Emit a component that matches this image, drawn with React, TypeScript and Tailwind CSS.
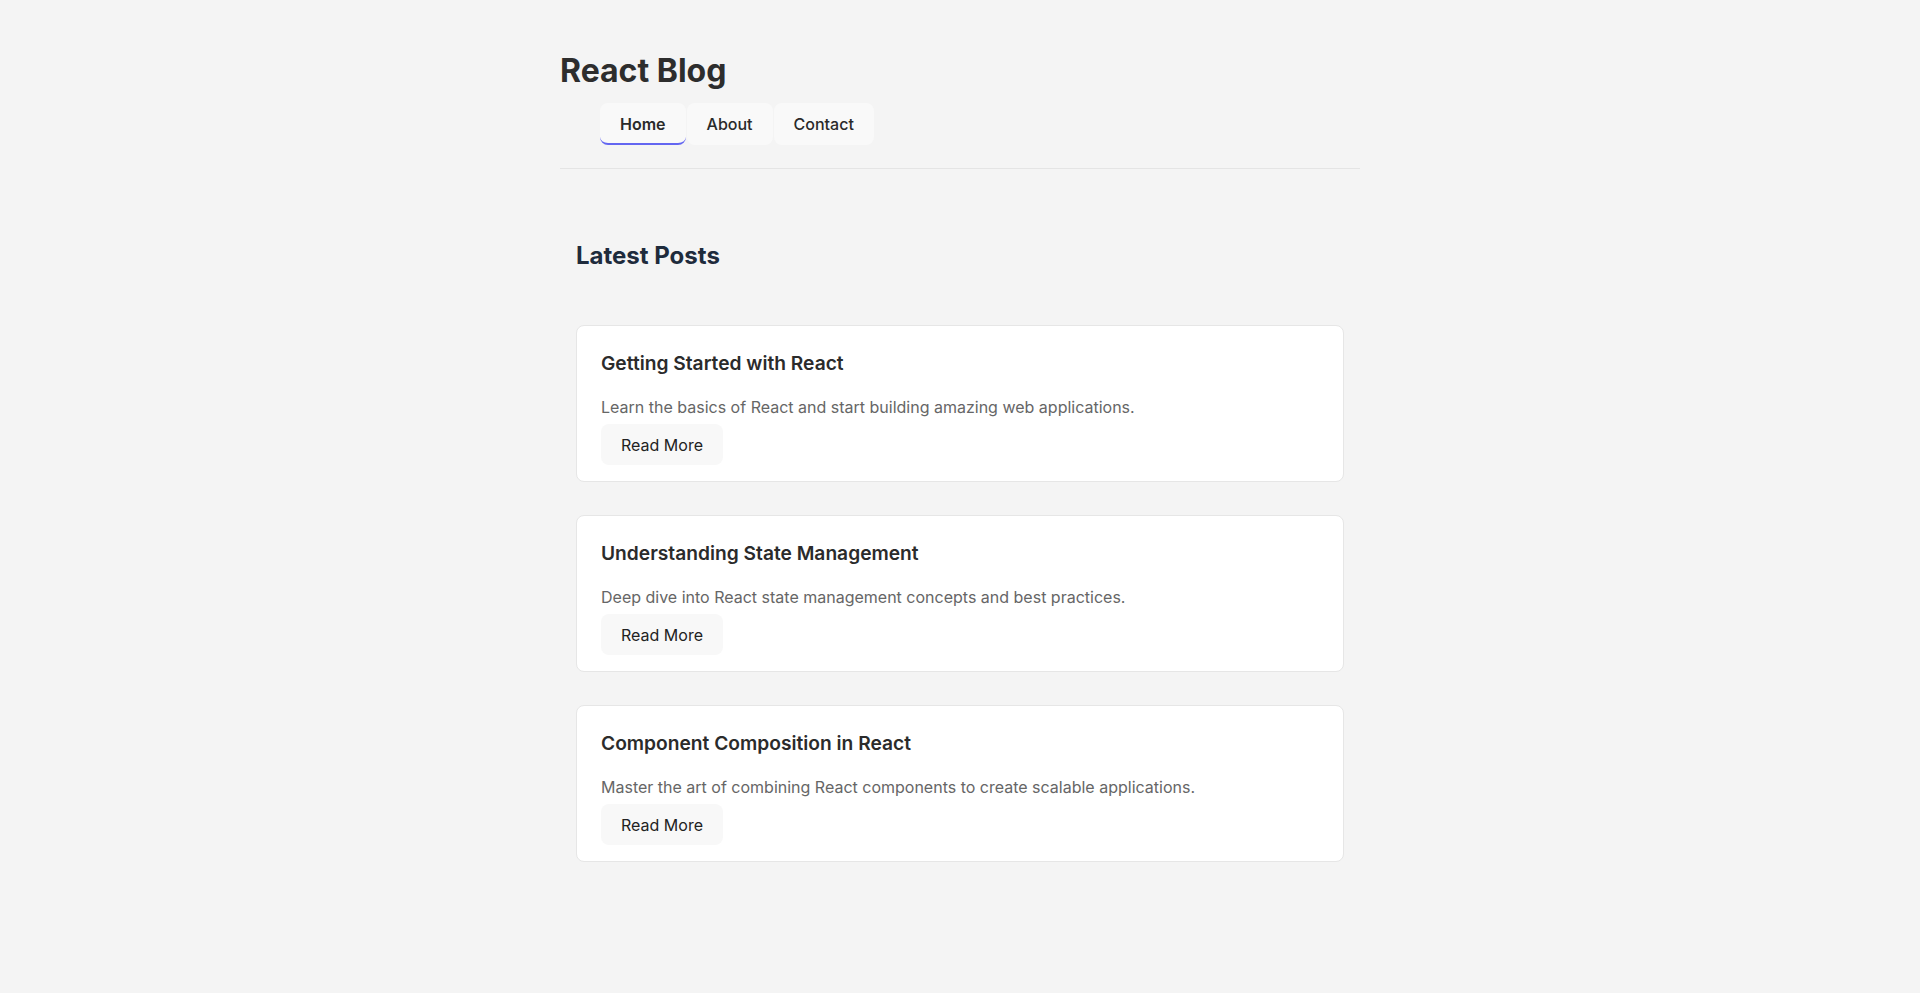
import React from "react";

const posts = [
  {
    title: "Getting Started with React",
    desc: "Learn the basics of React and start building amazing web applications.",
  },
  {
    title: "Understanding State Management",
    desc: "Deep dive into React state management concepts and best practices.",
  },
  {
    title: "Component Composition in React",
    desc: "Master the art of combining React components to create scalable applications.",
  },
];

export default function App() {
  return (
    <div className="min-h-screen bg-[#f4f4f4] font-['Inter','Liberation_Sans',sans-serif]">
      <div className="mx-auto w-[800px] pt-[52px]">
        <header className="border-b border-[#e4e4e4] pb-[23px]">
          <h1 className="text-[32px] font-bold leading-[38px] text-[#2d2d2d]">React Blog</h1>
          <nav className="mt-[13px] flex gap-[1px] pl-10">
            <button className="h-[42px] rounded-lg border-b-2 border-[#6366f1] bg-[#f9f9f9] px-5 pt-[2px] text-[16px] font-semibold text-[#2a2a2a]">
              Home
            </button>
            <button className="h-[42px] rounded-lg bg-[#f9f9f9] px-5 text-[16px] font-medium text-[#2a2a2a]">
              About
            </button>
            <button className="h-[42px] rounded-lg bg-[#f9f9f9] px-5 text-[16px] font-medium text-[#2a2a2a]">
              Contact
            </button>
          </nav>
        </header>
        <main className="px-4 pt-[69px]">
          <h2 className="text-[24px] font-bold leading-[36px] text-[#1e2b3c]">Latest Posts</h2>
          <div className="mt-[51px] flex flex-col gap-[33px]">
            {posts.map((p) => (
              <article
                key={p.title}
                className="rounded-lg border border-[#e6e6e6] bg-white px-6 pb-4 pt-[23px]"
              >
                <h3 className="text-[19.2px] font-semibold leading-[28px] text-[#2b2b2b]">{p.title}</h3>
                <p className="mt-[18px] text-[16px] leading-[24px] text-[#666666]">{p.desc}</p>
                <button className="mt-[5px] h-[41px] rounded-lg bg-[#f8f8f8] px-5 text-[16px] font-normal text-[#222222]">
                  Read More
                </button>
              </article>
            ))}
          </div>
        </main>
      </div>
    </div>
  );
}
